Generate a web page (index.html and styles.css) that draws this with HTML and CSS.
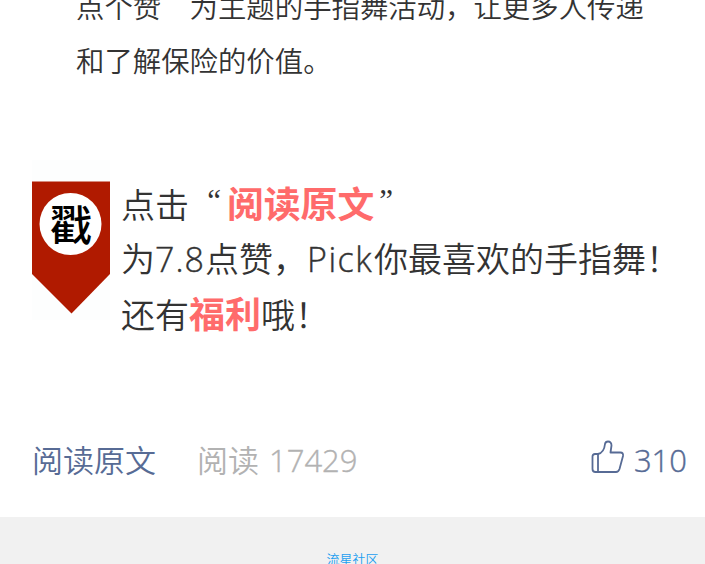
FILE: index.html
```html
<!DOCTYPE html>
<html lang="zh-CN">
<head>
  <meta charset="UTF-8" />
  <meta name="viewport" content="width=device-width, initial-scale=1.0"/>
  <title>手指舞活动</title>
  <link rel="stylesheet" href="styles.css">
</head>
<body>
  <main>
    <div class="texto">
      <p>点个赞　为主题的手指舞活动，让更多人传递</p>
      <p>和了解保险的价值。</p>
    </div>

    <section class="aviso">
      <div class="cinta">
        <svg width="78" height="160" viewBox="0 0 78 160">
          <path d="M0 0H78V160H0Z" fill="#fdfefe"/>
          <path d="M0 21.500H78V114L39.500 153.500L0 114Z" fill="#b01a00"/>
          <circle cx="38.500" cy="64" r="31" fill="#fff"/>
        </svg>
        <span class="sello">戳</span>
      </div>
      <div class="mensaje">
        <p>点击<span class="comilla abre">“</span><strong class="enlace">阅读原文</strong><span class="comilla cierra">”</span></p>
        <p>为<span class="num">7.8</span>点赞，<span class="pick">Pick</span>你最喜欢的手指舞！</p>
        <p>还有<strong>福利</strong>哦！</p>
      </div>
    </section>

    <div class="acciones">
      <a class="original">阅读原文</a>
      <span class="lecturas">阅读<span class="total">17429</span></span>
      <span class="likes">
        <svg width="34" height="34" viewBox="0 0 34 34" fill="none" stroke="#576b95" stroke-width="1.800" stroke-linejoin="round" stroke-linecap="round">
          <path d="M7 14H4Q1.500 14 1.500 16.500V29Q1.500 32 4.500 32H25Q27.500 32 28.500 29L32 16Q32.500 12.500 29.500 12.500H19.500L20.500 5.500Q20.500 1.500 17 1.500Q14.500 1.500 14 4C13.500 9 11.500 13 7 14ZM7 14V32"/>
        </svg>
        <span>310</span>
      </span>
    </div>
  </main>
  <footer>流星社区</footer>
</body>
</html>
```
FILE: styles.css
```css
body {
  margin: 0;
  height: 564px;
  overflow: hidden;
  background: #fff;
  color: #333;
  font-family: "Noto Sans CJK SC", sans-serif;
  font-weight: 350;
}
main {
  height: 517px;
  overflow: hidden;
}
p {
  margin: 0;
  white-space: nowrap;
}
.texto {
  height: 181px;
  margin-top: -21px;
  padding-left: 76px;
  font-size: 28.4px;
}
.texto p {
  height: 54px;
  line-height: 54px;
}
.aviso {
  display: flex;
  height: 268px;
  padding-left: 32px;
}
.cinta {
  position: relative;
  width: 78px;
  height: 160px;
}
.sello {
  position: absolute;
  left: 18px;
  top: 33px;
  font-size: 42px;
  line-height: 60px;
  font-weight: 500;
  color: #000;
}
.mensaje {
  padding: 15px 0 0 11px;
  font-size: 34px;
}
.mensaje p {
  height: 55px;
  line-height: 55px;
}
.mensaje strong {
  color: #ff6b6b;
  font-size: 36px;
  font-weight: 700;
}
.mensaje .enlace {
  font-size: 36.8px;
}
.comilla {
  display: inline-block;
  height: 40px;
  line-height: 40px;
  vertical-align: 7px;
  font-family: "Liberation Serif", serif;
  font-size: 31px;
}
.abre {
  width: 32px;
  padding-right: 6px;
  text-align: right;
}
.cierra {
  padding-left: 5px;
}
.num,
.pick,
.total,
.likes {
  font-family: "Open Sans", sans-serif;
  font-weight: 300;
  -webkit-text-stroke: 0.4px;
}
.num,
.pick {
  display: inline-block;
}
.num {
  width: 50px;
  letter-spacing: 1px;
}
.pick {
  width: 67px;
  letter-spacing: 1.5px;
}
.acciones {
  display: flex;
  align-items: center;
  height: 60px;
  padding: 0 18px 0 32px;
  font-size: 31px;
}
.original {
  color: #576b95;
}
.lecturas {
  margin-left: 41px;
  color: #b2b2b2;
}
.total {
  margin-left: 10px;
}
.likes {
  display: flex;
  align-items: center;
  gap: 9px;
  margin-left: auto;
  color: #576b95;
}
.likes svg {
  margin-bottom: 2px;
}
.likes span {
  padding-top: 3px;
}
footer {
  height: 47px;
  padding-top: 33px;
  box-sizing: border-box;
  background: #f1f1f1;
  color: #1d9ff0;
  font-size: 13px;
  line-height: 18px;
  text-align: center;
}
```
